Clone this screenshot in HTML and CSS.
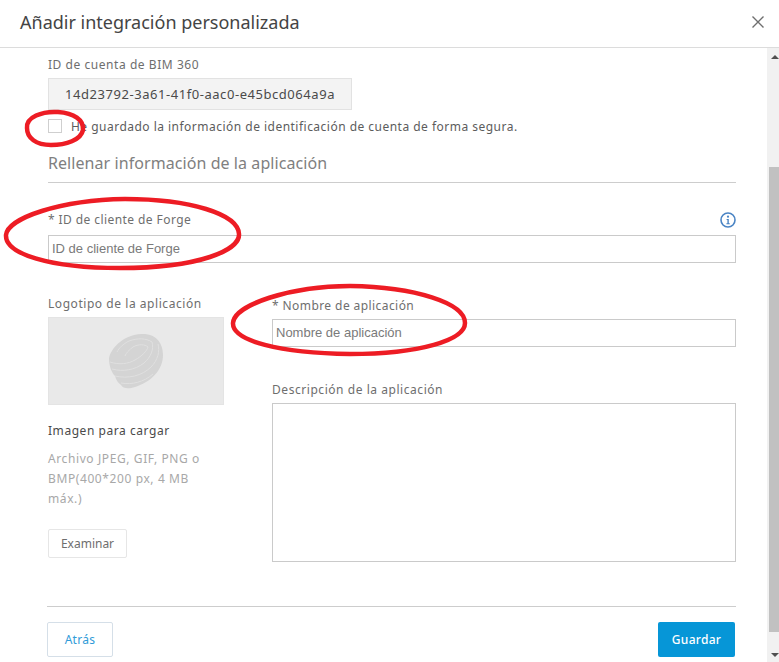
FILE: index.html
```html
<!DOCTYPE html>
<html lang="es">
<head>
<meta charset="utf-8">
<title>Añadir integración personalizada</title>
<link rel="stylesheet" href="styles.css">
</head>
<body>
<div class="dialog">
  <header class="head">
    <h1 class="title">Añadir integración personalizada</h1>
    <svg class="close" viewBox="0 0 14 14" width="14" height="14"><path d="M1.5 1.5 12.5 12.5M12.5 1.5 1.5 12.5" fill="none" stroke="#6e6e6e" stroke-width="1.4"/></svg>
  </header>
  <div class="scroller">
    <main class="content">
      <div class="label first">ID de cuenta de BIM 360</div>
      <div class="account">14d23792-3a61-41f0-aac0-e45bcd064a9a</div>
      <label class="check"><span class="box"></span><span>He guardado la información de identificación de cuenta de forma segura.</span></label>
      <h2 class="section">Rellenar información de la aplicación</h2>
      <div class="label-row">
        <div class="label required">* ID de cliente de Forge</div>
        <svg class="info" viewBox="0 0 16 16" width="16" height="16"><circle cx="8" cy="8" r="7" fill="none" stroke="#4a84c4" stroke-width="1.6"/><circle cx="8" cy="4.7" r="1.1" fill="#4a84c4"/><path d="M6.6 7h2.2v4.2h1v1H6.4v-1h1V8h-.8z" fill="#4a84c4"/></svg>
      </div>
      <div class="input">ID de cliente de Forge</div>
      <div class="columns">
        <section class="left">
          <div class="label">Logotipo de la aplicación</div>
          <div class="logo">
            <svg viewBox="0 0 54 55" width="54" height="55">
              <path d="M0 24C3 12 16 1 32 0c14-1 22 8 22 21 0 15-12 27-28 32-6 2-12 2-14-2-3-2-5-5-6-9-3-3-6-9-6-18z" fill="#d4d4d4"/>
              <g fill="none" stroke="#e0e0e0" stroke-width="1">
                <path d="M1 28c9 3 18 2 25-2 7-4 12-9 13-13-3-3-10-3-15 0-4 3-7 6-8 9"/>
                <path d="M3 35c11 3 23 1 32-6 7-6 10-14 8-21-6-4-15-4-23-1-6 3-10 7-12 11"/>
                <path d="M6 42c13 3 27 0 36-9 7-7 9-16 7-23"/>
                <path d="M12 49c11 2 23-1 32-9"/>
              </g>
            </svg>
          </div>
          <div class="upload">Imagen para cargar</div>
          <p class="hint">Archivo JPEG, GIF, PNG o BMP(400*200 px, 4 MB máx.)</p>
          <button class="browse" type="button">Examinar</button>
        </section>
        <section class="right">
          <div class="label required">* Nombre de aplicación</div>
          <div class="input tight">Nombre de aplicación</div>
          <div class="label desc">Descripción de la aplicación</div>
          <div class="textarea"></div>
        </section>
      </div>
      <footer class="foot">
        <button class="back" type="button">Atrás</button>
        <button class="save" type="button">Guardar</button>
      </footer>
    </main>
    <div class="scrollbar">
      <span class="arrow up"></span>
      <span class="thumb"></span>
      <span class="arrow down"></span>
    </div>
  </div>
  <svg class="marks" viewBox="0 0 779 662" width="779" height="662">
    <g fill="none" stroke="#ed1c24" stroke-width="4.5">
      <path d="M27 128C26 117 42 111 58 112 74 113 84 120 83 130 81 140 66 145 51 145 36 145 27 138 27 128Z"/>
      <path d="M6 235C8 218 60 200 125 199 190 199 238 214 239 234 240 250 200 268 120 268 50 268 5 254 6 235Z"/>
      <path d="M233 323C234 305 290 286 350 286 415 287 465 303 465 323 465 340 420 354 350 354 280 353 232 341 233 323Z"/>
    </g>
  </svg>
</div>
</body>
</html>
```
FILE: styles.css
```css
* { box-sizing: border-box; }
html, body { margin: 0; padding: 0; }
body {
  width: 779px;
  height: 662px;
  overflow: hidden;
  background: #fff;
  font-family: "Noto Sans", "Liberation Sans", sans-serif;
  color: #666;
}
.dialog { position: relative; width: 779px; height: 662px; display: flex; flex-direction: column; }
.head {
  height: 48px;
  flex: none;
  display: flex;
  align-items: center;
  justify-content: space-between;
  padding: 0 14px 4px 20px;
  border-bottom: 1px solid #dcdcdc;
}
.title { margin: 0; font-size: 18px; font-weight: 400; color: #444; }
.scroller { flex: 1; display: flex; min-height: 0; }
.content { flex: 1; min-width: 0; padding: 0 31px 0 48px; }
.label { font-size: 12px; line-height: 16px; color: #6e6e6e; letter-spacing: .55px; }
.required { letter-spacing: .42px; }
.first { margin-top: 9px; }
.account {
  width: 304px;
  height: 32px;
  margin-top: 5px;
  padding-left: 16px;
  background: #f3f3f3;
  border: 1px solid #e2e2e2;
  font-size: 13px;
  line-height: 30px;
  color: #4a4a4a;
  letter-spacing: .55px;
}
.check { display: flex; align-items: center; gap: 9px; height: 14px; margin-top: 9px; font-size: 12px; color: #5c5c5c; letter-spacing: .48px; white-space: nowrap; }
.box { width: 14px; height: 14px; flex: none; border: 1px solid #cfcfcf; background: #fff; }
.section {
  margin: 18px 0 0;
  height: 32px;
  font-size: 16px;
  line-height: 24px;
  font-weight: 400;
  color: #808080;
  letter-spacing: .07px;
  border-bottom: 1px solid #cdcdcd;
}
.label-row { display: flex; justify-content: space-between; align-items: center; margin-top: 29px; height: 16px; }
.input {
  height: 28px;
  margin-top: 7px;
  padding-left: 3px;
  border: 1px solid #cacaca;
  font-family: "Liberation Sans", Arial, sans-serif;
  font-size: 13px;
  line-height: 26px;
  color: #7a7a7a;
}
.tight { margin-top: 5px; }
.columns { display: flex; gap: 48px; margin-top: 33px; }
.left { width: 176px; flex: none; }
.right { flex: 1; min-width: 0; padding-top: 2px; }
.logo { height: 88px; margin-top: 5px; background: #e9e9e9; border: 1px solid #e4e4e4; display: flex; align-items: center; justify-content: center; }
.upload { margin-top: 18px; font-size: 12px; line-height: 16px; color: #4a4a4a; letter-spacing: .55px; }
.hint { margin: 10px 0 0; font-size: 12px; line-height: 20px; color: #a8a8a8; letter-spacing: .6px; }
.browse {
  display: block;
  width: 79px;
  height: 29px;
  margin-top: 20px;
  padding: 0;
  background: #fff;
  border: 1px solid #e6e6e6;
  border-radius: 2px;
  font: inherit;
  font-size: 12px;
  color: #6e6e6e;
  letter-spacing: 0;
}
.desc { margin-top: 35px; }
.textarea { height: 159px; margin-top: 5px; border: 1px solid #cacaca; }
.foot {
  display: flex;
  justify-content: space-between;
  height: 52px;
  margin: 44px 0 0 -1px;
  padding-top: 15px;
  border-top: 1px solid #cdcdcd;
}
.back, .save { height: 35px; padding: 0; border-radius: 2px; font: inherit; font-size: 12px; letter-spacing: .3px; }
.back { width: 66px; background: #fff; border: 1px solid #d5dfe8; color: #2f9bd8; }
.save { width: 77px; background: #0696d7; border: 0; color: #fff; font-weight: 500; margin-right: 1px; }
.scrollbar { width: 12px; flex: none; background: #f1f1f1; display: flex; flex-direction: column; align-items: flex-end; }
.thumb { width: 10px; height: 465px; margin-top: 108px; background: #c1c1c1; }
.arrow { width: 8px; height: 4px; flex: none; border-left: 4px solid transparent; border-right: 4px solid transparent; }
.up { margin-top: 7px; border-bottom: 4px solid #505050; }
.down { margin-top: 21px; border-top: 4px solid #505050; }
.marks { position: absolute; left: 0; top: 0; pointer-events: none; }
```
